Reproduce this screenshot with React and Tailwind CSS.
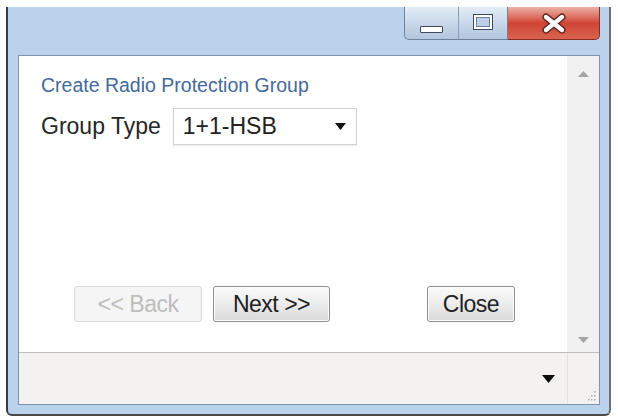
import React from 'react';

const font = { fontFamily: '"Liberation Sans", Arial, sans-serif' };

function CaptionButtons() {
  return (
    <div className="flex h-[33px] items-stretch">
      <div className="flex rounded-bl-[5px] border border-t-0 border-[#6f829a] bg-gradient-to-b from-[#e4edf7] via-[#c9d8ea] to-[#b2c6de] overflow-hidden">
        <div className="w-[54px] flex items-center justify-center border-r border-[#8a9cb3]">
          <div className="mt-[12px] h-[7px] w-[23px] rounded-[1px] border border-[#3b4a5e] bg-white" />
        </div>
        <div className="w-[48px] flex items-center justify-center">
          <div className="mb-[2px] h-[16px] w-[20px] border border-[#3b4a5e] bg-white p-[2px]">
            <div className="h-full w-full border border-[#6b7f99] bg-[#bcd0e8]" />
          </div>
        </div>
      </div>
      <div className="w-[92px] flex items-center justify-center rounded-br-[5px] border border-t-0 border-l-0 border-[#8b2c22] bg-gradient-to-b from-[#eab1a8] via-[#cf4334] to-[#d8644f]">
        <svg width="26" height="21" viewBox="0 0 26 21">
          <path d="M5 4 L21 17 M21 4 L5 17" stroke="#5a1f18" strokeWidth="7" strokeLinecap="round" />
          <path d="M5 4 L21 17 M21 4 L5 17" stroke="#ffffff" strokeWidth="4.4" strokeLinecap="round" />
        </svg>
      </div>
    </div>
  );
}

function Button({ children, disabled, className = '' }) {
  return (
    <div
      className={
        'h-[36px] flex items-center justify-center rounded-[3px] border text-[23px] leading-none tracking-[-0.5px] ' +
        (disabled
          ? 'border-[#d8d8d8] bg-[#f5f5f5] text-[#bdbdbd] '
          : 'border-[#8f8f8f] bg-gradient-to-b from-[#fafafa] via-[#ececec] to-[#d9d9d9] text-[#222] shadow-[inset_0_0_0_1px_#fbfbfb] ') +
        className
      }
    >
      {children}
    </div>
  );
}

export default function App() {
  return (
    <div className="w-[618px] h-[417px] bg-white overflow-hidden pl-[6px] pt-[7px]" style={font}>
      <div className="w-[605px] h-[409px] flex flex-col bg-[#bad2ec] border-l-2 border-r-2 border-b-2 border-l-[#3a3a3a] border-r-[#707070] border-b-[#4a4a4a] rounded-b-[6px] pl-[10px] pr-[9px] pb-[9px]">
        {/* title bar */}
        <div className="h-[48px] flex justify-end items-start">
          <CaptionButtons />
        </div>

        {/* client area */}
        <div className="flex-1 flex flex-col border border-[#7f93aa] bg-white">
          <div className="flex-1 flex">
            <div className="flex-1 flex flex-col pl-[22px]">
              <div className="mt-[18px] h-[24px] flex items-center text-[19.5px] text-[#44699a]">
                Create Radio Protection Group
              </div>
              <div className="mt-[10px] flex items-center h-[37px]">
                <span className="text-[23px] text-[#262626]">Group Type</span>
                <div className="ml-[12px] w-[184px] h-[37px] flex items-center justify-between border border-[#d2d2d2] shadow-[0_1px_1px_#eeeeee] pl-[9px] pr-[10px]">
                  <span className="text-[23px] text-[#222]">1+1-HSB</span>
                  <svg width="11" height="7" viewBox="0 0 11 7">
                    <path d="M0 0 H11 L5.5 7 Z" fill="#111" />
                  </svg>
                </div>
              </div>
              <div className="mt-[141px] ml-[33px] flex">
                <Button disabled className="w-[128px]">&lt;&lt; Back</Button>
                <Button className="w-[117px] ml-[11px]">Next &gt;&gt;</Button>
                <Button className="w-[88px] ml-[97px]">Close</Button>
              </div>
            </div>
            <div className="w-[32px] bg-[#f1f1f1] flex flex-col items-center justify-between pt-[15px] pb-[9px]">
              <svg width="11" height="6" viewBox="0 0 11 6">
                <path d="M0 6 H11 L5.5 0 Z" fill="#a4a4a4" />
              </svg>
              <svg width="11" height="6" viewBox="0 0 11 6">
                <path d="M0 0 H11 L5.5 6 Z" fill="#a4a4a4" />
              </svg>
            </div>
          </div>

          {/* status bar */}
          <div className="h-[52px] flex border-t border-[#bdbdbd] bg-[#f4f2f1]">
            <div className="flex-1 flex items-center justify-end pr-[12px]">
              <svg width="13" height="8" viewBox="0 0 13 8">
                <path d="M0 0 H13 L6.5 8 Z" fill="#0a0a0a" />
              </svg>
            </div>
            <div className="w-[32px] border-l border-[#e4e2e1] flex items-end justify-end p-[3px]">
              <svg width="10" height="10" viewBox="0 0 10 10">
                <g fill="#a9a9a9">
                  <rect x="8" y="0" width="1.5" height="1.5" />
                  <rect x="5" y="4" width="1.5" height="1.5" />
                  <rect x="8" y="4" width="1.5" height="1.5" />
                  <rect x="2" y="8" width="1.5" height="1.5" />
                  <rect x="5" y="8" width="1.5" height="1.5" />
                  <rect x="8" y="8" width="1.5" height="1.5" />
                </g>
              </svg>
            </div>
          </div>
        </div>
      </div>
    </div>
  );
}
